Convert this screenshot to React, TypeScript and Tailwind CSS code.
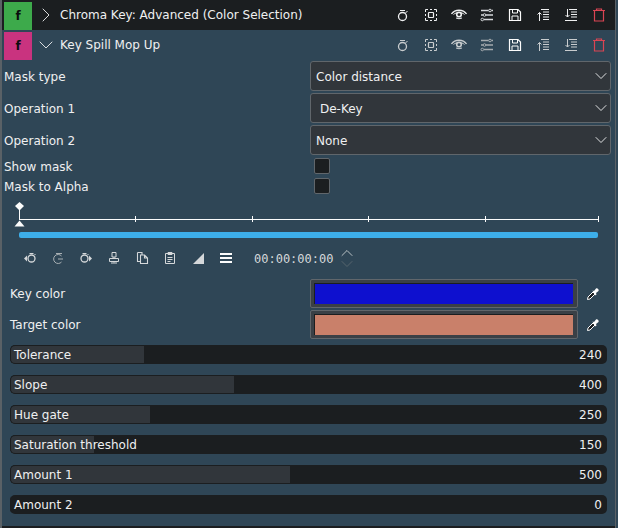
import type { ReactNode } from 'react'
import { ChevronDown, ChevronRight, ChevronUp } from 'lucide-react'

const font = { fontFamily: '"DejaVu Sans", sans-serif' }

function HeaderIcons({ dim }: { dim?: boolean }) {
  const c = dim ? '#c8ccce' : '#eff0f1'
  const Icon = ({ children, color }: { children: ReactNode; color?: string }) => (
    <svg width="16" height="16" viewBox="0 0 16 16" fill="none" stroke={color ?? c} strokeWidth="1">
      {children}
    </svg>
  )
  return (
    <div className="flex items-center gap-[12px]">
      <Icon>
        <circle cx="7.5" cy="9.5" r="4" strokeWidth="1.300" />
        <path d="M5 3.500h5M10.500 6l2-2" />
      </Icon>
      <Icon>
        <path d="M2.500 5v-2.500h2.500M11 2.500h2.500v2.500M13.500 11v2.500h-2.500M5 13.500h-2.500v-2.500M2.500 7v2M13.500 7v2M7 2.500h2M7 13.500h2" />
        <rect x="5.500" y="5.500" width="5" height="5" rx="0.500" strokeWidth="1.200" />
      </Icon>
      <Icon>
        <path d="M0.500 7C4 2 12 2 15.500 7" strokeWidth="1.300" />
        <path d="M2.500 7.500C5 5 11 5 13.500 7.500M5 11Q8 12.500 11 11" />
        <circle cx="8" cy="7.500" r="2.300" strokeWidth="1.600" />
      </Icon>
      <Icon color={dim ? '#a5abaf' : '#d5d8da'}>
        <path d="M2 3.500h7.500M12.500 3.500h1.500M2 8h2M7 8h7M5 12.500h9" strokeWidth="1.300" />
        <circle cx="11" cy="3.500" r="1.300" />
        <circle cx="5.500" cy="8" r="1.300" />
        <circle cx="3.300" cy="12.500" r="1.300" />
      </Icon>
      <Icon color="#fcfcfc">
        <path d="M2.500 2.500h8.500l2.500 2.500v8.500h-11z" strokeWidth="1.200" />
        <path d="M5.500 2.500v3.500h5v-3.500M5 13.500v-4.500h6v4.500" />
      </Icon>
      <Icon>
        <path d="M6 2.500h8M8 5h6M8 7.500h6M8 10h6M8 12.500h6M4.500 14v-8.500M2.500 7.500l2-2 2 2" />
      </Icon>
      <Icon>
        <path d="M6 2.500h8M8 5h6M8 7.500h6M8 10h6M2 13.500h12M4.500 2v8M2.500 8l2 2 2-2" />
      </Icon>
      <Icon color="#da4453">
        <path d="M2 3.500h12M5.500 3.500v-1.500h5v1.500M3.500 4v10h9v-10" strokeWidth="1.200" />
      </Icon>
    </div>
  )
}

function EffectHeader({
  color,
  title,
  open,
  dark,
}: {
  color: string
  title: string
  open?: boolean
  dark?: boolean
}) {
  return (
    <div className={`flex items-center h-[30px] pl-[2px] pr-[8px] ${dark ? 'bg-[#1b1e20]' : ''}`}>
      <div className={`w-[28px] h-[28px] mt-[2px] flex items-center justify-center font-bold text-[12px] text-[#0b0d0e] ${color}`}>f</div>
      {open ? (
        <ChevronDown className="ml-[2px] w-[24px] h-[24px] text-[#eff0f1]" strokeWidth={0.9} />
      ) : (
        <ChevronRight className="ml-[2px] w-[24px] h-[24px] text-[#eff0f1]" strokeWidth={0.9} />
      )}
      <span className="ml-[2px] flex-1 text-[12px] text-[#eff0f1]">{title}</span>
      <HeaderIcons dim={!dark} />
    </div>
  )
}

function Combo({ label, value, indent }: { label: string; value: string; indent?: boolean }) {
  return (
    <div className="flex items-center h-[30px]">
      <span className="w-[308px] pl-[2px] pt-[2px] text-[12px] text-[#eff0f1]">{label}</span>
      <div className={`flex-1 h-[30px] mr-[4px] flex items-center justify-between rounded-[3px] border border-[#60666b] bg-[#31363b] ${indent ? 'pl-[9px]' : 'pl-[5px]'} text-[12px] text-[#eff0f1]`}>
        <span className="pt-[2px]">{value}</span>
        <ChevronDown className="w-[20px] h-[20px] mr-[-1px]" strokeWidth={1.1} />
      </div>
    </div>
  )
}

function Check({ label }: { label: string }) {
  return (
    <div className="flex items-center h-[20px]">
      <span className="w-[312px] pl-[2px] pt-[2px] text-[12px] text-[#eff0f1]">{label}</span>
      <div className="w-[16px] h-[16px] rounded-[2px] border border-[#60666b] bg-[#1b1e20]" />
    </div>
  )
}

function Timeline() {
  return (
    <div className="mt-[6px] pl-[12px]">
      <svg width="586" height="30" viewBox="0 0 586 30" className="block">
        <path d="M5.500 0l4.500 4-4.500 4.500-4.500-4.500z" fill="#fcfcfc" />
        <path d="M5.500 7v11M5 17.500h580" stroke="#fcfcfc" fill="none" />
        <path d="M121.500 14v6M238.500 14v6M354.500 14v6M471.500 14v6M584.500 14v6" stroke="#fcfcfc" />
        <path d="M5.500 18.500l5 6h-10z" fill="#fcfcfc" />
      </svg>
      <div className="ml-[5px] h-[6px] w-[579px] rounded-[2px] bg-[#3daee9]" />
    </div>
  )
}

function Toolbar() {
  const Tool = ({ children }: { children: ReactNode }) => (
    <svg width="16" height="16" viewBox="0 0 16 16" fill="none" stroke="#d5d8da" strokeWidth="1" className="shrink-0">
      {children}
    </svg>
  )
  return (
    <div className="flex items-center h-[26px] mt-[7px] pl-[20px] gap-[12px]">
      <Tool>
        <circle cx="9.500" cy="8.500" r="3.500" strokeWidth="1.300" />
        <path d="M7.500 3.500h4M12.500 5l1-1" />
        <path d="M2 8.500l3-3v6z" fill="#d5d8da" stroke="none" />
      </Tool>
      <Tool>
        <path d="M11.500 6A4.500 4.500 0 1 0 11.500 12M6 3.500h6M13 9h-5" stroke="#a9b0b4" />
      </Tool>
      <Tool>
        <circle cx="6.500" cy="8.500" r="3.500" strokeWidth="1.300" />
        <path d="M4.500 3.500h4M9.500 5l1-1" />
        <path d="M14 8.500l-3-3v6z" fill="#d5d8da" stroke="none" />
      </Tool>
      <Tool>
        <path d="M6 2.500h4v4.500h-4zM3.500 8.500h9v3h-9zM8 7v1.500M8 11.500v1M5 13h6" />
      </Tool>
      <Tool>
        <path d="M3.500 2.500h4.500v2M3.500 2.500v9h2.500M6.500 5h4l3 3v5.500h-7zM10.500 5v3h3" strokeWidth="1.100" />
      </Tool>
      <Tool>
        <path d="M3.500 3.500h9v10h-9zM6 2.500h4v2h-4zM5.500 7.500h5M5.500 9.500h5M5.500 11.500h3" />
      </Tool>
      <Tool>
        <path d="M14 3v11h-11z" fill="#d5d8da" stroke="none" />
      </Tool>
      <Tool>
        <path d="M2 4h12M2 8h12M2 12h12" stroke="#fcfcfc" strokeWidth="2" />
      </Tool>
      <span className="ml-[8px] w-[79px] pt-[1px] text-[12px] text-[#d5d8da]" style={{ fontFamily: '"DejaVu Sans Mono", monospace' }}>
        00:00:00:00
      </span>
      <div className="ml-[-8px] flex flex-col items-center">
        <div className="h-[11px] flex items-center">
          <ChevronUp className="w-[20px] h-[20px] text-[#d5d8da]" strokeWidth={1} />
        </div>
        <div className="h-[11px] flex items-center">
          <ChevronDown className="w-[20px] h-[20px] text-[#5e6a72]" strokeWidth={1} />
        </div>
      </div>
    </div>
  )
}

function Dropper() {
  return (
    <svg width="16" height="16" viewBox="0 0 16 16" className="shrink-0">
      <path d="M2.500 13.500l0.500-2.500 5-5 2 2-5 5z" fill="#1b1e20" stroke="#fcfcfc" />
      <path d="M7.500 4.500l1.500 0.500 2-2.500c1-1 3.500 1 2.500 2.500l-2.500 2 0.500 1.500-1.500 1z" fill="#fcfcfc" />
    </svg>
  )
}

function ColorRow({ label, color }: { label: string; color: string }) {
  return (
    <div className="flex items-center h-[31px]">
      <span className="w-[308px] pl-[8px] text-[12px] text-[#eff0f1]">{label}</span>
      <div className="w-[268px] h-[29px] rounded-[2px] border border-[#60666b] bg-[#3a4046] pt-[3px] pb-[3px] pl-[3px] pr-[4px]">
        <div className="h-full border-t border-l border-[#1b1e20]" style={{ backgroundColor: color }} />
      </div>
      <div className="ml-[7px]">
        <Dropper />
      </div>
    </div>
  )
}

function Slider({ label, value, fill }: { label: string; value: string; fill: number }) {
  return (
    <div className="relative h-[19px] w-[597px] ml-[8px] mb-[11px] rounded-[5px] bg-[#1b1e20] overflow-hidden text-[12px] text-[#eff0f1]">
      <div className="absolute left-0 top-0 bottom-0 border border-[#1b1e20] border-r-0 rounded-l-[5px] bg-[#31363b]" style={{ width: fill }} />
      <div className="relative flex items-center justify-between h-full pl-[4px] pr-[5px]">
        <span>{label}</span>
        <span>{value}</span>
      </div>
    </div>
  )
}

const sliders = [
  { label: 'Tolerance', value: '240', fill: 134 },
  { label: 'Slope', value: '400', fill: 224 },
  { label: 'Hue gate', value: '250', fill: 140 },
  { label: 'Saturation threshold', value: '150', fill: 84 },
  { label: 'Amount 1', value: '500', fill: 280 },
  { label: 'Amount 2', value: '0', fill: 0 },
]

export default function App() {
  return (
    <div className="w-[618px] h-[528px] overflow-hidden bg-[#2f4656] pr-[2px]" style={font}>
      <div className="h-full border-l-[2px] border-r border-[#5a6166] flex flex-col">
        <EffectHeader color="bg-[#3daa4b]" title="Chroma Key: Advanced (Color Selection)" dark />
        <EffectHeader color="bg-[#c9337f]" title="Key Spill Mop Up" open />
        <div className="mt-[1px] flex flex-col gap-[2px]">
          <Combo label="Mask type" value="Color distance" />
          <Combo label="Operation 1" value="De-Key" indent />
          <Combo label="Operation 2" value="None" />
        </div>
        <div className="mt-[1px]">
          <Check label="Show mask" />
          <Check label="Mask to Alpha" />
        </div>
        <Timeline />
        <Toolbar />
        <div className="mt-[7px]">
          <ColorRow label="Key color" color="#0e10cf" />
          <ColorRow label="Target color" color="#c9806a" />
        </div>
        <div className="mt-[5px]">
          {sliders.map((s) => (
            <Slider key={s.label} {...s} />
          ))}
        </div>
        <div className="mt-auto h-[2px] bg-[#1b1e20]" />
      </div>
    </div>
  )
}
